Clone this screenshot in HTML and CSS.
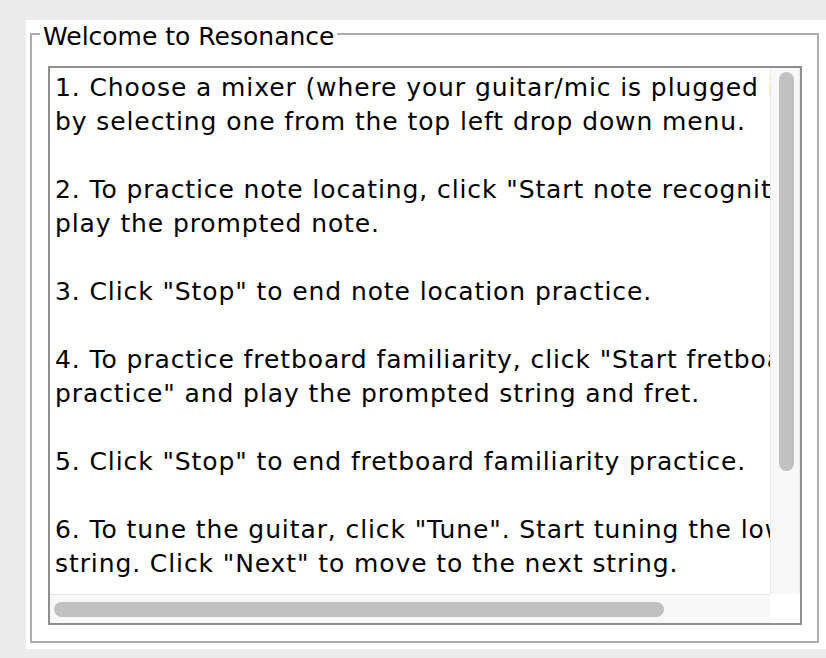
FILE: index.html
```html
<!DOCTYPE html>
<html>
<head>
<meta charset="utf-8">
<title>Welcome to Resonance</title>
<link rel="stylesheet" href="styles.css">
</head>
<body>
<div class="window">
  <fieldset class="group">
    <legend class="title">Welcome to Resonance</legend>
    <div class="group-body">
      <div class="scrollpane">
        <div class="main-row">
          <div class="viewport">
            <div class="text">1. Choose a mixer (where your guitar/mic is plugged in)
by selecting one from the top left drop down menu.

2. To practice note locating, click "Start note recognition" and
play the prompted note.

3. Click "Stop" to end note location practice.

4. To practice fretboard familiarity, click "Start fretboard familiarity
practice" and play the prompted string and fret.

5. Click "Stop" to end fretboard familiarity practice.

6. To tune the guitar, click "Tune". Start tuning the lowest
string. Click "Next" to move to the next string.</div>
          </div>
          <div class="vscroll"><div class="vthumb"></div></div>
        </div>
        <div class="bottom-row">
          <div class="hscroll"><div class="hthumb"></div></div>
          <div class="corner"></div>
        </div>
      </div>
    </div>
  </fieldset>
</div>
</body>
</html>
```

FILE: styles.css
```css
html, body {
  margin: 0;
  padding: 0;
  background: #ececec;
  font-family: "DejaVu Sans", "Liberation Sans", sans-serif;
  color: #000;
}

body {
  padding: 20px 0 0 26px;
  width: 800px;
  height: 638px;
  overflow: hidden;
}

.window {
  display: flow-root;
  background: #ffffff;
  width: 800px;
  height: 629px;
  padding-left: 4px;
  box-sizing: border-box;
}

.group {
  margin: -3px 0 0 0;
  padding: 0;
  width: 789px;
  box-sizing: border-box;
  border: 2px solid #aeaeae;
  min-width: 0;
}

.title {
  margin-left: 8px;
  padding: 6px 3px 0 3px;
  font-size: 25px;
  line-height: 28px;
}

.group-body {
  padding: 15px 15px 16px 16px;
}

.scrollpane {
  border: 2px solid #8e8e8e;
  height: 559px;
  box-sizing: border-box;
  display: flex;
  flex-direction: column;
  background: #fff;
}

.main-row {
  display: flex;
  height: 526px;
}

.viewport {
  width: 720px;
  overflow: hidden;
}

.text {
  white-space: pre;
  font-size: 25px;
  letter-spacing: 0.9px;
  line-height: 34px;
  padding: 3px 0 0 5px;
}

.vscroll {
  width: 30px;
  box-sizing: border-box;
  background: #f8f8f8;
  border-left: 1px solid #e8e8e8;
  border-right: 1px solid #ececec;
  padding: 4px 0 0 8px;
}

.vthumb {
  width: 15px;
  height: 399px;
  border-radius: 8px;
  background: #c1c1c1;
}

.bottom-row {
  display: flex;
  height: 29px;
}

.hscroll {
  width: 720px;
  box-sizing: border-box;
  background: #f8f8f8;
  border-top: 1px solid #e6e6e6;
  padding: 7px 0 0 4px;
}

.hthumb {
  width: 610px;
  height: 15px;
  border-radius: 8px;
  background: #c1c1c1;
}

.corner {
  flex: 1;
  background: #ffffff;
}
```
